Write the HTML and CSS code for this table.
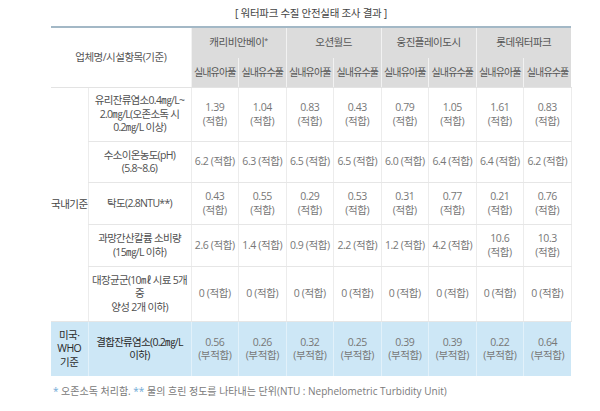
FILE: index.html
```html
<!DOCTYPE html>
<html lang="ko">
<head>
<meta charset="utf-8">
<title>워터파크 수질 안전실태 조사 결과</title>
<link rel="stylesheet" href="styles.css">
</head>
<body>
<div class="wrap">
  <div class="title">[ 워터파크 수질 안전실태 조사 결과 ]</div>
  <table class="tbl">
    <colgroup>
      <col class="c-cat"><col class="c-item">
      <col class="c-v"><col class="c-v"><col class="c-v"><col class="c-v">
      <col class="c-v"><col class="c-v"><col class="c-v"><col class="c-v">
    </colgroup>
    <thead>
      <tr class="h1">
        <th class="corner" colspan="2" rowspan="2">업체명/시설항목(기준)</th>
        <th class="grp" colspan="2">캐리비안베이<sup>*</sup></th>
        <th class="grp" colspan="2">오션월드</th>
        <th class="grp" colspan="2">웅진플레이도시</th>
        <th class="grp" colspan="2">롯데워터파크</th>
      </tr>
      <tr class="h2">
        <th class="sub">실내유아풀</th><th class="sub">실내유수풀</th>
        <th class="sub">실내유아풀</th><th class="sub">실내유수풀</th>
        <th class="sub">실내유아풀</th><th class="sub">실내유수풀</th>
        <th class="sub">실내유아풀</th><th class="sub">실내유수풀</th>
      </tr>
    </thead>
    <tbody>
      <tr class="r1">
        <td class="cat" rowspan="5">국내기준</td>
        <td class="item">유리잔류염소0.4㎎/L~<br>2.0㎎/L(오존소독 시<br>0.2㎎/L 이상)</td>
        <td>1.39<br>(적합)</td><td>1.04<br>(적합)</td>
        <td>0.83<br>(적합)</td><td>0.43<br>(적합)</td>
        <td>0.79<br>(적합)</td><td>1.05<br>(적합)</td>
        <td>1.61<br>(적합)</td><td>0.83<br>(적합)</td>
      </tr>
      <tr class="r2">
        <td class="item">수소이온농도(pH)<br>(5.8~8.6)</td>
        <td>6.2 (적합)</td><td>6.3 (적합)</td>
        <td>6.5 (적합)</td><td>6.5 (적합)</td>
        <td>6.0 (적합)</td><td>6.4 (적합)</td>
        <td>6.4 (적합)</td><td>6.2 (적합)</td>
      </tr>
      <tr class="r3">
        <td class="item">탁도(2.8NTU**)</td>
        <td>0.43<br>(적합)</td><td>0.55<br>(적합)</td>
        <td>0.29<br>(적합)</td><td>0.53<br>(적합)</td>
        <td>0.31<br>(적합)</td><td>0.77<br>(적합)</td>
        <td>0.21<br>(적합)</td><td>0.76<br>(적합)</td>
      </tr>
      <tr class="r4">
        <td class="item">과망간산칼륨 소비량<br>(15㎎/L 이하)</td>
        <td>2.6 (적합)</td><td>1.4 (적합)</td>
        <td>0.9 (적합)</td><td>2.2 (적합)</td>
        <td>1.2 (적합)</td><td>4.2 (적합)</td>
        <td>10.6<br>(적합)</td><td>10.3<br>(적합)</td>
      </tr>
      <tr class="r5">
        <td class="item">대장균군(10㎖ 시료 5개<br>중<br>양성 2개 이하)</td>
        <td>0 (적합)</td><td>0 (적합)</td>
        <td>0 (적합)</td><td>0 (적합)</td>
        <td>0 (적합)</td><td>0 (적합)</td>
        <td>0 (적합)</td><td>0 (적합)</td>
      </tr>
      <tr class="r6 who">
        <td class="cat">미국·<br>WHO<br>기준</td>
        <td class="item">결합잔류염소(0.2㎎/L<br>이하)</td>
        <td>0.56<br>(부적합)</td><td>0.26<br>(부적합)</td>
        <td>0.32<br>(부적합)</td><td>0.25<br>(부적합)</td>
        <td>0.39<br>(부적합)</td><td>0.39<br>(부적합)</td>
        <td>0.22<br>(부적합)</td><td>0.64<br>(부적합)</td>
      </tr>
    </tbody>
  </table>
  <p class="note"><span class="ast">*</span> 오존소독 처리함. <span class="ast">**</span> 물의 흐린 정도를 나타내는 단위(NTU : Nephelometric Turbidity Unit)</p>
</div>
</body>
</html>
```

FILE: styles.css
```css
html, body {
  margin: 0;
  padding: 0;
  background: #ffffff;
}

body {
  font-family: "Open Sans", "Noto Sans CJK KR", sans-serif;
  font-size: 10.5px;
  color: #777777;
}

.wrap {
  width: 520px;
  margin-left: 51px;
}

.title {
  height: 26px;
  line-height: 26px;
  text-align: center;
  font-size: 10.5px;
  letter-spacing: -0.3px;
  color: #444444;
}

.tbl {
  width: 520px;
  border-collapse: collapse;
  table-layout: fixed;
  border-top: 2px solid #a3b8c6;
}

.c-cat { width: 37px; }
.c-item { width: 103px; }
.c-v { width: 47.5px; }

.tbl th,
.tbl td {
  padding: 0;
  text-align: center;
  vertical-align: middle;
  font-weight: normal;
  line-height: 13.5px;
  white-space: nowrap;
  overflow: hidden;
}

.tbl th {
  color: #555555;
  letter-spacing: -0.5px;
}

.corner {
  background: #ffffff;
  border-bottom: 1px solid #e3e3e3;
  color: #555555;
}

.h1 th.grp {
  height: 30px;
  background: #dcdcdc;
  border-left: 1px solid #f2f2f2;
}

.h1 th sup {
  font-size: 7px;
  vertical-align: 3px;
  line-height: 0;
}

.h2 th.sub {
  height: 29px;
  background: #dcdcdc;
  border-left: 1px solid #f2f2f2;
  border-bottom: 1px solid #e3e3e3;
  font-size: 10px;
  letter-spacing: -0.9px;
}

.tbl td {
  border-bottom: 1px solid #e6e6e6;
  border-left: 1px solid #ececec;
  letter-spacing: -0.4px;
}

.tbl td:last-child {
  border-right: 1px solid #ececec;
}

.tbl td.cat {
  border-left: none;
  color: #444444;
  letter-spacing: -0.5px;
}

.tbl td.item {
  color: #505050;
  letter-spacing: -0.7px;
}

.r1 td { height: 53px; }
.r2 td { height: 40px; }
.r3 td { height: 41px; }
.r4 td { height: 41px; }
.r5 td { height: 54px; }
.r6 td { height: 54px; }

.who td {
  background: #cde7f6;
  border-left-color: #e2f1fa;
  border-bottom: none;
}

.who td.item,
.who td.cat {
  color: #2a2a2a;
  font-weight: normal;
}

.who td:last-child {
  border-right: none;
}

.note {
  margin: 7px 0 0 2px;
  font-size: 10px;
  letter-spacing: 0;
  color: #7a7a7a;
}

.ast {
  color: #6fa9d6;
}
```
